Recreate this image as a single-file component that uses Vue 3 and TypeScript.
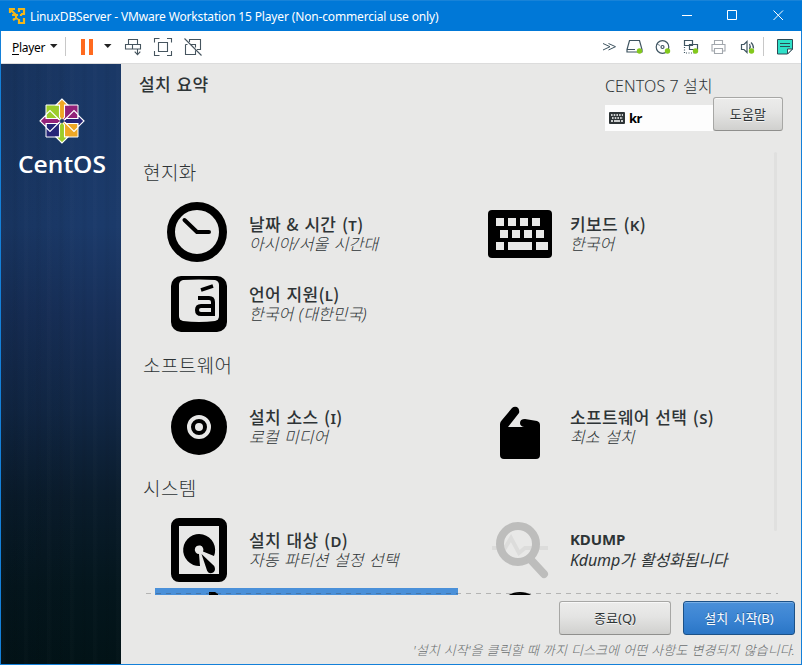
<script setup lang="ts">
interface Spoke {
  icon: string
  title: string
  key?: string
  status: string
  off?: boolean
  active?: boolean
}
interface Category {
  name: string
  spokes: Spoke[]
}

const categories: Category[] = [
  {
    name: '현지화',
    spokes: [
      { icon: 'clock', title: '날짜 & 시간 ', key: 'T', status: '아시아/서울 시간대' },
      { icon: 'keyboard', title: '키보드 ', key: 'K', status: '한국어' },
      { icon: 'language', title: '언어 지원', key: 'L', status: '한국어 (대한민국)' },
    ],
  },
  {
    name: '소프트웨어',
    spokes: [
      { icon: 'source', title: '설치 소스 ', key: 'I', status: '로컬 미디어' },
      { icon: 'package', title: '소프트웨어 선택 ', key: 'S', status: '최소 설치' },
    ],
  },
  {
    name: '시스템',
    spokes: [
      { icon: 'disk', title: '설치 대상 ', key: 'D', status: '자동 파티션 설정 선택' },
      { icon: 'kdump', title: 'KDUMP', status: 'Kdump가 활성화됩니다', off: true },
      { icon: 'network', title: '', status: '', active: true },
      { icon: 'policy', title: '', status: '' },
    ],
  },
]
</script>

<template>
  <div class="window">
    <header class="titlebar">
      <svg class="app-icon" viewBox="0 0 18 18">
        <g fill="none" stroke="#f3b61b" stroke-width="2.200">
          <path d="M2 6V2h5M2.500 2.500L8 8M11 5V2h5v5h-3M4 8h6M13 7v2" />
          <path d="M8 8v4M5 13l3-2 2 1M16 11v5h-5v-4" />
        </g>
      </svg>
      <span class="caption">LinuxDBServer - VMware Workstation 15 Player (Non-commercial use only)</span>
      <svg class="controls" viewBox="0 0 120 30">
        <path d="M10 14.500h10M55.500 9.500h9v9h-9zM101.500 9.500l9.500 9.500M111 9.500l-9.500 9.500" fill="none" stroke="#fff" />
      </svg>
    </header>

    <nav class="toolbar">
      <span class="player"><u>P</u>layer</span>
      <svg class="tools" viewBox="0 0 156 32">
        <path d="M0 13h7.500l-3.750 4zM54 13h7.500l-3.750 4z" fill="#222" />
        <path d="M15.500 6v19" stroke="#c8c8c8" />
        <path d="M31 8h4v16h-4zM39 8h4v16h-4z" fill="#ff6a1f" />
        <g fill="none" stroke="#46555f" stroke-width="1.100">
          <path d="M78.500 13.500v-5h9v5M75.500 13.500h7v4.500h-7zM82.500 13.500h8v4.500h-8zM87.500 18v5M84.700 20.700l2.800 3 2.800-3" />
          <path d="M104.500 11.500v-4h5M117 7.500h4.500v4M121.500 20v4.500H117M109.500 24.500h-5V20M108.500 11.500h9v9h-9z" />
          <path d="M139.500 11V8.500h11V18.500H147M135.500 13.500v10h10v-4M135.500 13.500h2M141 13.500h4.500v3M134.500 7.500l17 17" />
        </g>
      </svg>
      <svg class="devices" viewBox="0 0 200 32">
        <g fill="none" stroke="#3f5561" stroke-width="1.200">
          <path d="M3 12.500l7 3.200-7 3.300M8.500 12.500l7 3.200-7 3.300" stroke-width="1" />
          <path d="M29.500 9.500h10l2.500 9v2.500H27v-2.500zM27 18.500h8M30 21h5" />
          <circle cx="62.500" cy="16" r="6.300" /><circle cx="62.500" cy="16" r="1.500" />
          <path d="M57 13l3 1.500" stroke-width=".7" />
          <path d="M84.500 9.500h8v5h-8zM89.500 13.500h8v5h-8z" fill="#fff" />
          <path d="M84.500 16v6h10" stroke-dasharray="1 1.500" />
          <path d="M141.500 13.500h2.500l3-3v11l-3-3h-2.500zM149.500 13q1.500 2.500 0 5M151 11.500q2.500 2 2.500 6" />
        </g>
        <path d="M114.500 13V9.500h8V13M114.500 20h-2.500v-6.500h13V20h-2.500M114.500 17.500h8v5h-8z" fill="none" stroke="#a2a7ad" stroke-width="1.100" />
        <g fill="#83c81c">
          <circle cx="39.500" cy="20" r="2.700" /><circle cx="67.500" cy="20" r="2.700" />
          <circle cx="95.500" cy="20" r="2.700" /><circle cx="151.500" cy="20" r="2.700" />
        </g>
        <path d="M163.500 6v19" stroke="#c8c8c8" />
        <path d="M177.500 8.500h15V18l-5 5h-10z" fill="#2fe0c8" stroke="#2c4a55" />
        <path d="M187.500 23v-5h5zM180 12.500h10M180 15.500h10" fill="#fff" stroke="#2c4a55" />
      </svg>
    </nav>

    <div class="body">
      <aside class="sidebar">
        <svg class="logo" viewBox="-23 -23 46 46">
          <g stroke="#fff" stroke-width="1">
            <path d="M-16 -16h16v16h-16z" fill="#9ccd2a" />
            <path d="M0 -16h16v16h-16z" fill="#932279" />
            <path d="M-16 0h16v16h-16z" fill="#262577" />
            <path d="M0 0h16v16h-16z" fill="#efa724" />
            <g stroke-width="1.100">
              <path d="M-22 0l6-6v3.500l12 0 3 2.500-3 2.500h-12V6z" fill="#932279" />
              <path d="M22 0l-6-6v3.500H4L1 0l3 2.500h12V6z" fill="#262577" />
              <path d="M0-22l-6 6h3.500v12L0-1l2.500-3v-12H6z" fill="#efa724" />
              <path d="M0 22l-6-6h3.500V4L0 1l2.500 3v12H6z" fill="#9ccd2a" />
              <path d="M-16-6.500l4-4L-3-1.500M-16 6.500l4 4L-3 1.500M16-6.500l-4-4L3-1.500M16 6.500l-4 4L3 1.500" fill="none" />
            </g>
          </g>
          <path d="M-2.500 0L0-2.500 2.500 0 0 2.500z" fill="#1b3866" />
        </svg>
        <svg class="wordmark" viewBox="0 0 94 30">
          <text x="3" y="22.500" textLength="88" lengthAdjust="spacingAndGlyphs">CentOS</text>
        </svg>
      </aside>

      <main class="hub">
        <section class="head">
          <h1>설치 요약</h1>
          <div class="product">
            <div class="release">CENTOS 7 설치</div>
            <div class="layout-box">
              <svg viewBox="0 0 16 12">
                <rect width="16" height="12" rx="1" fill="#2e3436" />
                <path d="M2 3h12M3 6h11" stroke="#fff" stroke-width="1.600" stroke-dasharray="1.600 1.100" />
                <path d="M2 9h2M5 9h6M12 9h2" stroke="#fff" stroke-width="1.500" />
              </svg>
              <b>kr</b>
            </div>
          </div>
          <button class="btn help">도움말</button>
        </section>

        <div class="spokes">
          <section v-for="c in categories" :key="c.name">
            <h2>{{ c.name }}</h2>
            <div class="grid">
              <article v-for="s in c.spokes" :key="s.icon" class="spoke" :class="{ active: s.active }">
                <svg class="icon" viewBox="0 0 64 64">
                  <g v-if="s.icon === 'clock'" fill="none" stroke="#000">
                    <circle cx="30" cy="30" r="26" stroke-width="8" />
                    <path d="M17.500 18L30 30h12" stroke-width="4" stroke-linecap="round" stroke-linejoin="round" />
                  </g>
                  <g v-else-if="s.icon === 'keyboard'">
                    <rect y="8" width="64" height="48" rx="4" />
                    <path d="M8 16h8v8H8zM20 16h8v8h-8zM32 16h8v8h-8zM44 16h8v8h-8zM12 28h8v8h-8zM24 28h8v8h-8zM36 28h8v8h-8zM48 28h8v8h-8zM8 40h8v8H8zM20 40h24v8H20zM48 40h12v8H48z" fill="#e8e8e7" />
                  </g>
                  <g v-else-if="s.icon === 'language'">
                    <rect x="4" y="4" width="56" height="56" rx="10" />
                    <path d="M16 8q16-1 32 0 4 1 4 5v31q0 4-4 5-16 2-32 0-4-1-4-5V13q0-4 4-5z" fill="#e8e8e7" />
                    <path d="M34 18l12-4" fill="none" stroke="#000" stroke-width="3.600" />
                    <path d="M31 26h11q4 0 4 4v14M46 34H34q-4 0-4 4t4 4h13" fill="none" stroke="#000" stroke-width="4" />
                  </g>
                  <g v-else-if="s.icon === 'source'">
                    <circle cx="32" cy="32" r="28" />
                    <circle cx="32" cy="32" r="10" fill="none" stroke="#e8e8e7" stroke-width="4" />
                    <circle cx="32" cy="32" r="4" fill="#e8e8e7" />
                  </g>
                  <g v-else-if="s.icon === 'package'">
                    <path d="M12 29q0-2 2-4L24 13q2-2 5-1 3 2 2 6L20 32h16q-4-1-4-4 0-4 5-4l12 2q3 1 3 4v30q0 4-4 4H16q-4 0-4-4z" />
                  </g>
                  <g v-else-if="s.icon === 'disk'">
                    <rect x="8" y="4" width="48" height="56" rx="4" fill="none" stroke="#000" stroke-width="8" />
                    <path d="M33 48A16 16 0 1 1 47 38L36 33.500A4.300 4.300 0 1 0 32 36z" />
                    <path d="M34.500 36L47.200 48q2 4-1 6.500-4 2-6-1.500z" />
                  </g>
                  <g v-else-if="s.icon === 'kdump'" fill="none">
                    <path d="M4 30h13l6-10 8 15 6-5h23" stroke="#dcdcdb" stroke-width="4" />
                    <circle cx="30" cy="26" r="18" stroke="#bdbdbc" stroke-width="8" />
                    <path d="M43 42l13 14" stroke="#bdbdbc" stroke-width="8" stroke-linecap="round" />
                  </g>
                  <g v-else-if="s.icon === 'network'">
                    <path d="M42 4h6l3 2v6h-9z" />
                  </g>
                  <ellipse v-else cx="32" cy="14" rx="16" ry="10" />
                </svg>
                <div v-if="s.title" class="label" :class="{ latin: s.off }">
                  <h3>{{ s.title }}<template v-if="s.key">(<span class="key">{{ s.key }}</span>)</template></h3>
                  <p>{{ s.status }}</p>
                </div>
              </article>
            </div>
          </section>
          <i class="undershoot"></i>
          <i class="scrollbar"></i>
        </div>

        <footer class="foot">
          <div class="actions">
            <button class="btn">종료(Q)</button>
            <button class="btn primary">설치 시작(B)</button>
          </div>
          <p class="note">'설치 시작'을 클릭할 때 까지 디스크에 어떤 사항도 변경되지 않습니다.</p>
        </footer>
      </main>
    </div>
  </div>
</template>

<style>
body {
  margin: 0;
  overflow: hidden;
}
</style>

<style scoped>
* {
  box-sizing: border-box;
}
h1, h2, h3, p {
  margin: 0;
}
.window {
  display: flex;
  flex-direction: column;
  width: 802px;
  height: 665px;
  border: 1px solid #1480d9;
  border-top: 0;
  color: #2e3436;
  background: #e8e8e7;
  font-family: "Noto Sans", "Noto Sans CJK KR", sans-serif;
}
.titlebar {
  display: flex;
  align-items: center;
  height: 31px;
  padding: 0 0 0 8px;
  margin: 0 -1px;
  background: #0078d7;
  border-top: 1px solid #1883d8;
  color: #fff;
}
.app-icon {
  width: 18px;
  height: 18px;
  margin-right: 4px;
}
.caption {
  font-size: 12px;
  letter-spacing: -0.155px;
  white-space: nowrap;
}
.controls {
  width: 120px;
  height: 30px;
  margin-left: auto;
  margin-right: 10px;
}
.toolbar {
  display: flex;
  align-items: center;
  height: 33px;
  padding-left: 11px;
  background: #fff;
  border-bottom: 1px solid #dcdcdc;
  color: #000;
}
.player {
  width: 38px;
  font-size: 12px;
  letter-spacing: -0.3px;
}
.player u {
  text-underline-offset: 2px;
}
.tools {
  width: 156px;
  height: 32px;
}
.devices {
  width: 200px;
  height: 32px;
  margin-left: auto;
  margin-right: 1px;
}
.body {
  display: flex;
  flex: 1;
  min-height: 0;
}
.sidebar {
  display: flex;
  flex-direction: column;
  align-items: center;
  width: 120px;
  padding-top: 34px;
  background:
    repeating-linear-gradient(90deg, rgba(255, 255, 255, 0.01) 0 3px, transparent 5px 11px, rgba(0, 0, 0, 0.03) 13px 15px, transparent 18px 23px),
    linear-gradient(90deg, rgba(0, 10, 20, 0.14), transparent 70%),
    linear-gradient(#1a3866 0, #1b3a6a 27%, #172f58 42%, #112745 58%, #0a1c2c 72%, #04161d 87%, #021317 100%);
}
.logo {
  width: 46px;
  height: 46px;
  margin-left: 2px;
}
.wordmark {
  width: 94px;
  height: 30px;
  margin: 6px 0 0 1px;
}
.wordmark text {
  fill: #fff;
  font: 600 22.5px "Open Sans", sans-serif;
}
.hub {
  display: flex;
  flex-direction: column;
  flex: 1;
  min-width: 0;
}
.head {
  display: flex;
  height: 85px;
  padding: 0 18px 0 18px;
}
h1 {
  flex: 1;
  padding-top: 9px;
  font-size: 17px;
  font-weight: 500;
  line-height: 24px;
  letter-spacing: 0.3px;
  word-spacing: 1px;
}
.product {
  width: 108px;
}
.release {
  padding-top: 10px;
  font-size: 16px;
  font-weight: 300;
  line-height: 24px;
  letter-spacing: 0.1px;
  white-space: nowrap;
}
.layout-box {
  display: flex;
  align-items: center;
  gap: 4px;
  height: 26px;
  margin-top: 7px;
  padding-left: 4px;
  background: #fdfdfd;
  color: #000;
  font-size: 13px;
}
.layout-box b {
  letter-spacing: -0.5px;
}
.layout-box svg {
  width: 16px;
  height: 12px;
}
.btn {
  width: 112px;
  height: 34px;
  padding: 0 0 2px;
  border: 1px solid #a7a7a5;
  border-bottom-color: #8f8f8d;
  border-radius: 3px;
  background: linear-gradient(#ececeb, #e4e4e3 45%, #d0d0ce);
  box-shadow: inset 0 1px #f8f8f8;
  color: #2e3436;
  font-family: inherit;
  font-size: 13px;
  text-shadow: 0 1px #f3f3f3;
}
.help {
  width: 70px;
  margin-top: 33px;
  letter-spacing: 0.2px;
}
.primary {
  border-color: #1c5187;
  background: linear-gradient(#4a90d9, #3a83d2 55%, #2a76c6);
  box-shadow: inset 0 1px #78aee5;
  color: #fff;
  text-shadow: 0 -1px #1f5c9b;
  word-spacing: 2px;
}
.spokes {
  position: relative;
  height: 446px;
  overflow: hidden;
}
h2 {
  height: 53px;
  padding-left: 22px;
  font-size: 19px;
  font-weight: 300;
  line-height: 49px;
  letter-spacing: 0.4px;
}
.grid {
  display: grid;
  grid-template-columns: 303px 303px;
  grid-auto-rows: 70px;
  column-gap: 18px;
  padding-left: 34px;
}
.spoke {
  display: flex;
  padding-left: 12px;
}
.spoke.active {
  background: #4a90d9;
}
.icon {
  flex: none;
  width: 64px;
  height: 64px;
}
.label {
  padding: 12px 0 0 18px;
  white-space: nowrap;
}
h3 {
  height: 20px;
  font-family: "Noto Sans CJK KR", sans-serif;
  font-size: 17px;
  font-weight: 500;
  line-height: 19px;
  letter-spacing: 0.3px;
  word-spacing: 1.5px;
}
.key {
  font-family: "Noto Sans", sans-serif;
  font-size: 15px;
  font-weight: 600;
  line-height: 1;
}
.label p {
  height: 20px;
  font-size: 16px;
  font-style: italic;
  font-weight: 300;
  line-height: 20px;
  letter-spacing: 0.05px;
  word-spacing: 1.3px;
}
.label.latin h3 {
  font-family: "Noto Sans", sans-serif;
  font-size: 15px;
  font-weight: 700;
  line-height: 18px;
  letter-spacing: -0.1px;
}
.label.latin p {
  font-weight: 400;
  letter-spacing: -0.15px;
}
.undershoot {
  position: absolute;
  left: 25px;
  right: 23px;
  top: 444px;
  height: 1px;
  background: repeating-linear-gradient(90deg, rgba(60, 60, 60, 0.3) 0 5px, transparent 5px 10px);
}
.scrollbar {
  position: absolute;
  top: 3px;
  right: 24px;
  width: 3px;
  height: 379px;
  border-radius: 2px;
  background: #e0e0df;
}
.foot {
  padding: 6px 6px 0 0;
}
.actions {
  display: flex;
  justify-content: flex-end;
  gap: 12px;
}
.note {
  margin-top: 5px;
  color: #6b6f70;
  font-size: 13px;
  font-style: italic;
  font-weight: 300;
  line-height: 20px;
  letter-spacing: 0.1px;
  word-spacing: 0.5px;
  text-align: right;
  white-space: nowrap;
}
</style>
